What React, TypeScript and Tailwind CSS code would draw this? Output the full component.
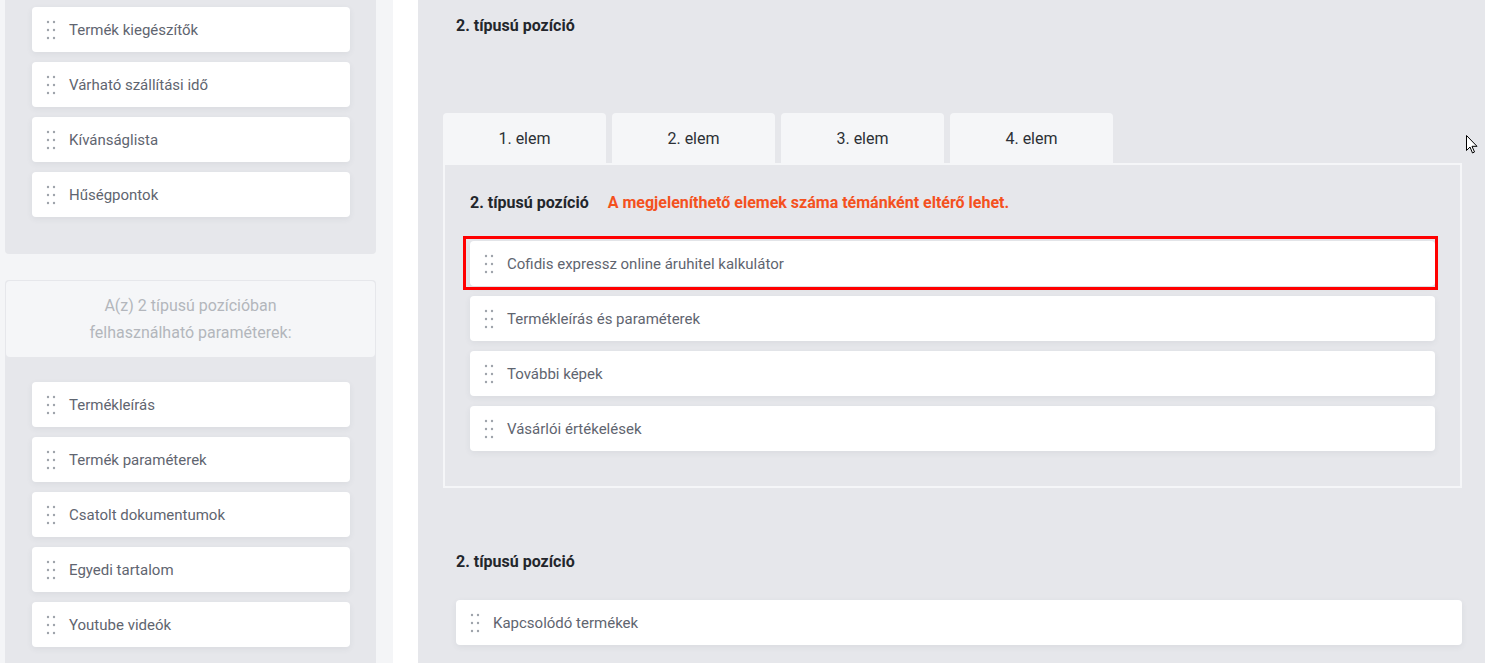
import type { ReactNode } from "react";

const font = { fontFamily: "Roboto, 'Liberation Sans', sans-serif" };

function DragDots() {
  return (
    <svg width="10" height="20" viewBox="0 0 10 20" className="shrink-0 text-[#9ea3ab]" fill="currentColor">
      <circle cx="2" cy="2" r="1.2" />
      <circle cx="8" cy="2" r="1.2" />
      <circle cx="2" cy="10" r="1.2" />
      <circle cx="8" cy="10" r="1.2" />
      <circle cx="2" cy="18" r="1.2" />
      <circle cx="8" cy="18" r="1.2" />
    </svg>
  );
}

function Item({ label, className = "", children }: { label: string; className?: string; children?: ReactNode }) {
  return (
    <div className={`relative flex h-[45px] items-center gap-[13px] rounded-[4px] bg-white pl-[14px] shadow-[0_2px_6px_rgba(60,64,80,0.07)] ${className}`}>
      <DragDots />
      <span className="pt-[2px] text-[15px] text-[#5f6570]">{label}</span>
      {children}
    </div>
  );
}

const topItems = ["Termék kiegészítők", "Várható szállítási idő", "Kívánságlista", "Hűségpontok"];
const paramItems = ["Termékleírás", "Termék paraméterek", "Csatolt dokumentumok", "Egyedi tartalom", "Youtube videók"];
const tabItems = ["Termékleírás és paraméterek", "További képek", "Vásárlói értékelések"];
const tabs = ["1. elem", "2. elem", "3. elem", "4. elem"];

export default function App() {
  return (
    <div style={font} className="relative flex h-[663px] w-full overflow-hidden bg-[#f4f5f7]">
      {/* left column */}
      <div className="flex w-[376px] shrink-0 flex-col pl-[5px]">
        <div className="flex flex-col gap-[10px] rounded-b-[4px] bg-[#e6e7eb] pb-[37px] pl-[27px] pt-[7px]">
          {topItems.map((t) => (
            <Item key={t} label={t} className="w-[318px]" />
          ))}
        </div>
        <div className="mt-[26px] flex flex-1 flex-col rounded-t-[4px] bg-[#e6e7eb]">
          <div className="mx-[1px] mt-[1px] rounded-[4px] bg-[#f5f6f8] py-[11px] text-center text-[16px] leading-[27px] text-[#b3b6bc]">
            A(z) 2 típusú pozícióban
            <br />
            felhasználható paraméterek:
          </div>
          <div className="flex flex-col gap-[10px] pl-[27px] pt-[25px]">
            {paramItems.map((t) => (
              <Item key={t} label={t} className="w-[318px]" />
            ))}
          </div>
        </div>
      </div>

      {/* divider strip */}
      <div className="w-[17px] shrink-0 bg-[#f4f5f7]" />
      <div className="w-[25px] shrink-0 bg-white" />

      {/* right panel */}
      <div className="flex flex-1 flex-col bg-[#e6e7eb]">
        <div className="pl-[38px] pt-[16px] text-[16px] font-bold leading-[20px] text-[#23262b]">2. típusú pozíció</div>

        <div className="mt-[77px] pl-[25px] pr-[23px]">
          <div className="flex gap-[6px]">
            {tabs.map((t) => (
              <div key={t} className="flex h-[50px] w-[163px] items-center justify-center rounded-t-[4px] bg-[#f5f6f8] pt-[2px] text-[16px] text-[#2c3036]">
                {t}
              </div>
            ))}
          </div>
          <div className="border-2 border-[#f5f6f8] px-[25px] pb-[35px] pt-[28px]">
            <div className="flex items-center gap-[19px] text-[16px] font-bold leading-[20px]">
              <span className="text-[#23262b]">2. típusú pozíció</span>
              <span className="text-[#f4511e]">A megjeleníthető elemek száma témánként eltérő lehet.</span>
            </div>
            <div className="mt-[28px] flex flex-col gap-[10px]">
              <Item label="Cofidis expressz online áruhitel kalkulátor">
                <div className="pointer-events-none absolute -bottom-[4px] -left-[7px] -right-[3px] -top-[5px] border-[3px] border-[#ff0000]" />
              </Item>
              {tabItems.map((t) => (
                <Item key={t} label={t} />
              ))}
            </div>
          </div>
        </div>

        <div className="mt-[64px] pl-[38px] text-[16px] font-bold leading-[20px] text-[#23262b]">2. típusú pozíció</div>
        <div className="mt-[28px] pl-[38px] pr-[23px]">
          <Item label="Kapcsolódó termékek" />
        </div>
      </div>

      {/* mouse cursor */}
      <svg className="absolute left-[1466px] top-[135px]" width="12" height="19" viewBox="0 0 12 19">
        <path d="M0.5 0.5 L0.5 15.5 L4 12 L6.5 18 L8.5 17 L6 11.3 L11 11.3 Z" fill="#fff" stroke="#000" strokeWidth="1" strokeLinejoin="miter" />
      </svg>
    </div>
  );
}
